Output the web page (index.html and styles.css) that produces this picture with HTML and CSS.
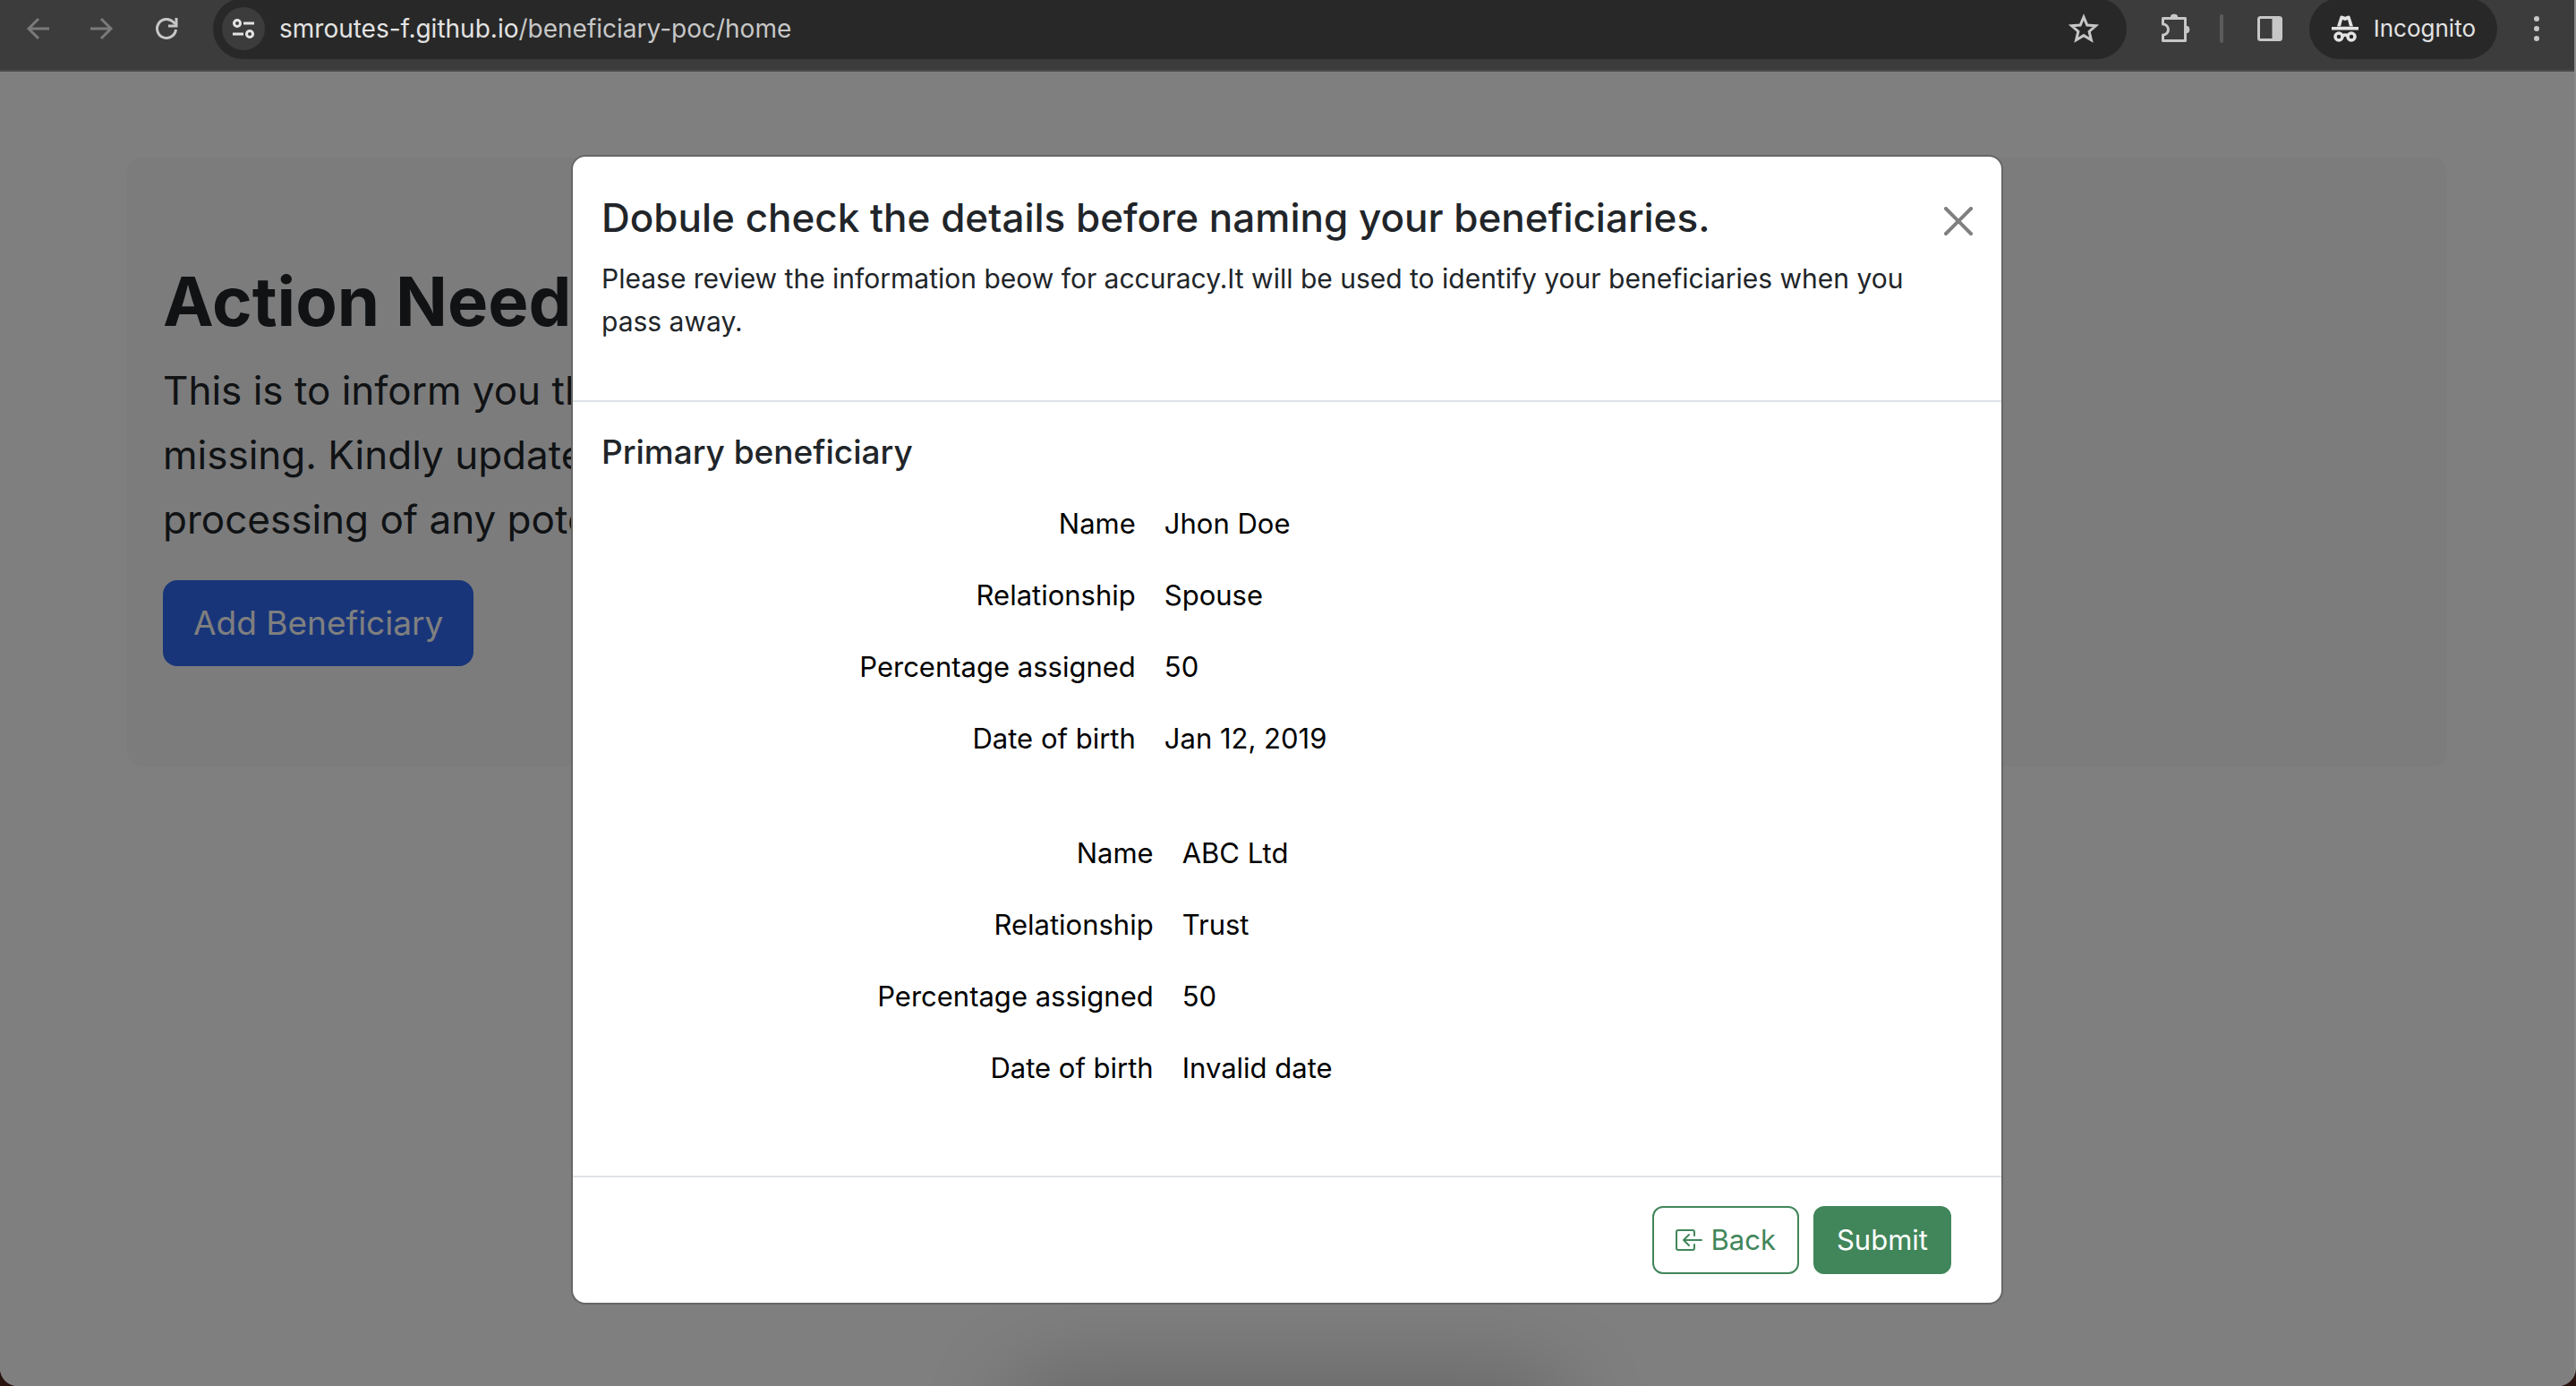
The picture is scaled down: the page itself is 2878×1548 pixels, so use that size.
FILE: index.html
```html
<!DOCTYPE html>
<html lang="en">
<head>
<meta charset="utf-8">
<title>Beneficiary</title>
<link rel="stylesheet" href="styles.css">
</head>
<body>
<div class="window">
  <header class="toolbar">
    <nav class="nav" aria-label="History">
      <button class="tool dim" aria-label="Back"><svg width="32" height="32" viewBox="0 0 32 32" fill="none" stroke="currentColor" stroke-width="3"><path d="M29 16H6M17 5L6 16l11 11"/></svg></button>
      <button class="tool dim" aria-label="Forward"><svg width="32" height="32" viewBox="0 0 32 32" fill="none" stroke="currentColor" stroke-width="3"><path d="M3 16h23M15 5l11 11-11 11"/></svg></button>
      <button class="tool" aria-label="Reload"><svg width="32" height="32" viewBox="0 0 32 32" fill="none" stroke="currentColor" stroke-width="3"><path d="M26.500 17A10.500 10.500 0 1 1 23.500 8.500L26 11"/><path d="M27 4v9h-9" /></svg></button>
    </nav>
    <div class="omnibox">
      <button class="site-info" aria-label="Site information"><svg width="28" height="28" viewBox="0 0 28 28" fill="none" stroke="currentColor" stroke-width="3"><circle cx="7" cy="8" r="3.500"/><path d="M14 8h12M2 20h12"/><circle cx="21" cy="20" r="3.500"/></svg></button>
      <p class="url"><span class="host">smroutes-f.github.io</span>/beneficiary-poc/home</p>
      <button class="tool" aria-label="Bookmark"><svg width="36" height="36" viewBox="0 0 36 36" fill="none" stroke="currentColor" stroke-width="3"><path d="M18 5l3.800 9 9.700.800-7.400 6.400 2.300 9.500L18 25.600l-8.400 5.100 2.300-9.500-7.400-6.400 9.700-.800z"/></svg></button>
    </div>
    <div class="actions">
      <button class="tool" aria-label="Extensions"><svg width="36" height="36" viewBox="0 0 36 36"><path d="M4.500 6.500h25v25h-25v-6.500a6 6 0 0 0 0-12z" fill="none" stroke="currentColor" stroke-width="3" stroke-linejoin="round"/><path d="M13 6a4 4 0 0 1 8 0zM30 15a4 4 0 0 1 0 8z" fill="currentColor" stroke="currentColor"/></svg></button>
      <span class="divider"></span>
      <button class="tool" aria-label="Side panel"><svg width="32" height="32" viewBox="0 0 32 32"><rect x="3.500" y="3.500" width="25" height="25" rx="2" fill="none" stroke="currentColor" stroke-width="3"/><path d="M18.500 3h10v26h-10z" fill="currentColor"/></svg></button>
      <button class="incognito"><svg width="32" height="32" viewBox="0 0 32 32"><path d="M1 14h30v3.500H1zM7 13.500l3.500-11q.500-1.500 2-1l3.500 1.300 3.500-1.300q1.500-.500 2 1l3.500 11z" fill="currentColor"/><path d="M11 13.500l2-7.500 3 1 3-1 2 7.500z" fill="#282828"/><g fill="none" stroke="currentColor" stroke-width="3.500"><circle cx="9" cy="25" r="4"/><circle cx="23" cy="25" r="4"/><path d="M13 24q3-2 6 0"/></g></svg>Incognito</button>
      <button class="tool" aria-label="Menu"><svg width="32" height="32" viewBox="0 0 32 32" fill="currentColor"><circle cx="16" cy="5" r="3"/><circle cx="16" cy="16" r="3"/><circle cx="16" cy="27" r="3"/></svg></button>
    </div>
  </header>

  <main class="page">
    <section class="notice">
      <h1 class="notice-title">Action Needed</h1>
      <p class="lead">This is to inform you that<br>missing. Kindly update<br>processing of any potential</p>
      <button class="btn-primary">Add Beneficiary</button>
    </section>

    <div class="backdrop">
      <div class="dock-shadow"></div>
      <div class="modal" role="dialog" aria-modal="true" aria-labelledby="modal-title">
        <div class="modal-header">
          <div class="modal-heading">
            <h2 class="modal-title" id="modal-title">Dobule check the details before naming your beneficiaries.</h2>
            <p class="modal-text">Please review the information beow for accuracy.It will be used to identify your beneficiaries when you pass away.</p>
          </div>
          <button class="close" aria-label="Close"><svg width="32" height="32" viewBox="0 0 16 16" fill="currentColor"><path d="M.293.293a1 1 0 0 1 1.414 0L8 6.586 14.293.293a1 1 0 1 1 1.414 1.414L9.414 8l6.293 6.293a1 1 0 0 1-1.414 1.414L8 9.414l-6.293 6.293a1 1 0 0 1-1.414-1.414L6.586 8 .293 1.707a1 1 0 0 1 0-1.414"/></svg></button>
        </div>
        <div class="modal-body">
          <h3 class="group-title">Primary beneficiary</h3>
          <table class="details person">
            <tr><th scope="row">Name</th><td>Jhon Doe</td></tr>
            <tr><th scope="row">Relationship</th><td>Spouse</td></tr>
            <tr><th scope="row">Percentage assigned</th><td>50</td></tr>
            <tr><th scope="row">Date of birth</th><td>Jan 12, 2019</td></tr>
          </table>
          <table class="details trust">
            <tr><th scope="row">Name</th><td>ABC Ltd</td></tr>
            <tr><th scope="row">Relationship</th><td>Trust</td></tr>
            <tr><th scope="row">Percentage assigned</th><td>50</td></tr>
            <tr><th scope="row">Date of birth</th><td>Invalid date</td></tr>
          </table>
        </div>
        <div class="modal-footer">
          <button class="btn btn-outline"><svg width="32" height="32" viewBox="0 0 16 16" fill="currentColor"><path d="M10 3.500a.5.5 0 0 0-.5-.5h-8a.5.5 0 0 0-.5.5v9a.5.5 0 0 0 .5.5h8a.5.5 0 0 0 .5-.5v-2a.5.5 0 0 1 1 0v2A1.500 1.500 0 0 1 9.500 14h-8A1.500 1.500 0 0 1 0 12.500v-9A1.500 1.500 0 0 1 1.500 2h8A1.500 1.500 0 0 1 11 3.500v2a.5.5 0 0 1-1 0z"/><path d="M4.146 8.354a.5.5 0 0 1 0-.708l3-3a.5.5 0 1 1 .708.708L5.707 7.500H14.500a.5.5 0 0 1 0 1H5.707l2.147 2.146a.5.5 0 0 1-.708.708z"/></svg>Back</button>
          <button class="btn btn-success">Submit</button>
        </div>
      </div>
    </div>
  </main>
</div>
</body>
</html>
```
FILE: styles.css
```css
* { box-sizing: border-box; margin: 0; }

html { background: #2a1410; }

body {
  font-family: Inter, "Liberation Sans", sans-serif;
  font-size: 31px;
  line-height: 48px;
  color: #212529;
}

button {
  font: inherit;
  border: 0;
  background: none;
  color: inherit;
  white-space: nowrap;
}

svg { display: block; flex: none; }

.window {
  display: flex;
  flex-direction: column;
  min-height: 100vh;
  border-right: 2px solid #8a8a8a;
  border-radius: 0 0 20px 20px;
  overflow: hidden;
}

/* Browser toolbar */
.toolbar {
  display: flex;
  align-items: center;
  height: 80px;
  padding: 0 26px 14px;
  background: #3c3c3c;
  border-bottom: 2px solid #4a4a4a;
  color: #c7c7c7;
  font-size: 28px;
  line-height: 36px;
}

.nav { display: flex; gap: 40px; margin-right: 36px; }
.tool { padding: 0; }
.dim { color: #7a7a7a; }

.omnibox {
  display: flex;
  flex: 1;
  align-items: center;
  height: 68px;
  padding: 0 30px 0 10px;
  border-radius: 34px;
  background: #282828;
}

.site-info {
  display: grid;
  place-items: center;
  width: 48px;
  height: 48px;
  padding: 0;
  border-radius: 50%;
  background: #3c3c3c;
  color: #e3e3e3;
}

.url { flex: 1; margin-left: 16px; }
.host { color: #e3e3e3; }

.actions { display: flex; align-items: center; margin-left: 36px; }
.divider { width: 4px; height: 32px; margin: 0 36px 0 32px; border-radius: 2px; background: #5c5c5c; }

.incognito {
  display: flex;
  align-items: center;
  gap: 16px;
  height: 68px;
  margin: 0 28px;
  padding: 0 24px;
  border-radius: 34px;
  background: #282828;
  color: #e3e3e3;
  font-size: 26px;
}

/* Page under the modal */
.page {
  position: relative;
  flex: 1;
  padding: 96px 48px;
  background: #fff;
}

.notice {
  max-width: 2592px;
  margin: 0 auto;
  padding: 112px 40px;
  border-radius: 16px;
  background: #f8f9fa;
}

.notice-title { font-size: 76px; line-height: 96px; font-weight: 700; margin-bottom: 16px; }
.lead { font-size: 44px; line-height: 72px; margin-bottom: 32px; }

.btn-primary {
  height: 96px;
  padding: 0 34px;
  border-radius: 16px;
  background: #306af4;
  color: #fff;
  font-size: 37px;
}

/* Modal */
.backdrop {
  position: absolute;
  inset: 0;
  padding: 93px 32px;
  overflow: hidden;
  background: rgba(0, 0, 0, .5);
}

.modal {
  position: relative;
  max-width: 1600px;
  margin: 0 auto;
  border: 2px solid #666;
  border-radius: 16px;
  background: #fff;
}

.modal-header {
  display: flex;
  align-items: flex-start;
  justify-content: space-between;
  padding: 40px 32px 64px;
  border-bottom: 2px solid #dee2e6;
}

.modal-title { font-size: 44px; line-height: 56px; font-weight: 500; margin-bottom: 16px; }
.modal-text { font-size: 30px; }
.close { padding: 16px 0; color: #808080; }

.modal-body { padding: 32px; }
.group-title { font-size: 37px; line-height: 48px; font-weight: 500; margin-bottom: 16px; }

.details {
  width: 100%;
  margin-bottom: 48px;
  border-collapse: collapse;
  table-layout: fixed;
  color: #000;
}

.details th, .details td { padding: 16px; font-weight: 400; text-align: left; }
.details th { text-align: right; }
.person th { width: 40%; }
.trust th { width: 41.3%; }

.modal-footer {
  display: flex;
  justify-content: flex-end;
  gap: 16px;
  padding: 32px 56px;
  border-top: 2px solid #dee2e6;
}

.btn {
  display: flex;
  align-items: center;
  gap: 8px;
  height: 76px;
  padding: 0 24px;
  border: 2px solid #41865a;
  border-radius: 12px;
}

.btn-outline { color: #41865a; }
.btn-success { background: #41865a; color: #fff; }

.dock-shadow {
  position: absolute;
  left: 50%;
  top: 100%;
  width: 600px;
  height: 80px;
  margin-left: -300px;
  border-radius: 40px;
  box-shadow: 0 0 100px 16px rgba(0, 0, 0, .2);
}
```
